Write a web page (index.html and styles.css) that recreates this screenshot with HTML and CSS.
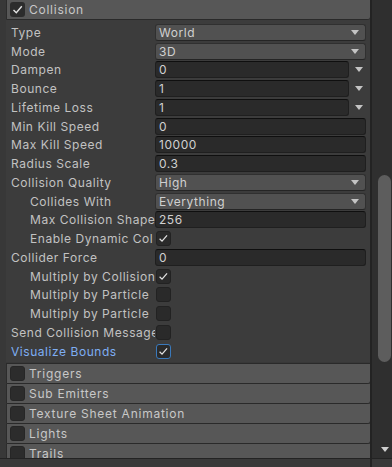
FILE: index.html
```html
<!DOCTYPE html>
<html lang="en">
<head>
  <meta charset="UTF-8">
  <title>Collision Module</title>
  <link rel="stylesheet" href="styles.css">
</head>
<body>
  <div class="window">
    <div class="main">
      <div class="inspector">
        <!-- Collision module, expanded -->
        <div class="module-head">
          <span class="toggle">
            <svg viewBox="0 0 15 15" width="15" height="15"><polyline points="3.5,8 6.3,10.8 11.8,4.2" fill="none" stroke="#e2e2e2" stroke-width="1.4"/></svg>
          </span>
          <span class="module-title">Collision</span>
        </div>
        <div class="module-body">
          <div class="row"><span class="prop">Type</span><div class="popup">World<i class="arrow"></i></div></div>
          <div class="row"><span class="prop">Mode</span><div class="popup">3D<i class="arrow"></i></div></div>
          <div class="row"><span class="prop">Dampen</span><div class="field">0</div><span class="curve"><i class="arrow"></i></span></div>
          <div class="row"><span class="prop">Bounce</span><div class="field">1</div><span class="curve"><i class="arrow"></i></span></div>
          <div class="row"><span class="prop">Lifetime Loss</span><div class="field">1</div><span class="curve"><i class="arrow"></i></span></div>
          <div class="row"><span class="prop">Min Kill Speed</span><div class="field">0</div></div>
          <div class="row"><span class="prop">Max Kill Speed</span><div class="field">10000</div></div>
          <div class="row"><span class="prop">Radius Scale</span><div class="field">0.3</div></div>
          <div class="row"><span class="prop">Collision Quality</span><div class="popup">High<i class="arrow"></i></div></div>
          <div class="row"><span class="prop sub">Collides With</span><div class="popup">Everything<i class="arrow"></i></div></div>
          <div class="row"><span class="prop sub">Max Collision Shape</span><div class="field">256</div></div>
          <div class="row"><span class="prop sub">Enable Dynamic Col</span><span class="check"><svg viewBox="0 0 15 15" width="13" height="13"><polyline points="3,7.8 5.8,10.6 11.6,3.8" fill="none" stroke="#e2e2e2" stroke-width="1.4"/></svg></span></div>
          <div class="row"><span class="prop">Collider Force</span><div class="field">0</div></div>
          <div class="row"><span class="prop sub">Multiply by Collision</span><span class="check"><svg viewBox="0 0 15 15" width="13" height="13"><polyline points="3,7.8 5.8,10.6 11.6,3.8" fill="none" stroke="#e2e2e2" stroke-width="1.4"/></svg></span></div>
          <div class="row"><span class="prop sub">Multiply by Particle</span><span class="check"></span></div>
          <div class="row"><span class="prop sub">Multiply by Particle</span><span class="check"></span></div>
          <div class="row"><span class="prop">Send Collision Message</span><span class="check"></span></div>
          <div class="row"><span class="prop focused">Visualize Bounds</span><span class="check focus"><svg viewBox="0 0 15 15" width="13" height="13"><polyline points="3,7.8 5.8,10.6 11.6,3.8" fill="none" stroke="#e2e2e2" stroke-width="1.4"/></svg></span></div>
        </div>

        <!-- collapsed modules -->
        <div class="module-list">
          <div class="module-head"><span class="toggle off"></span><span class="module-title">Triggers</span></div>
          <div class="module-head"><span class="toggle off"></span><span class="module-title">Sub Emitters</span></div>
          <div class="module-head"><span class="toggle off"></span><span class="module-title">Texture Sheet Animation</span></div>
          <div class="module-head"><span class="toggle off"></span><span class="module-title">Lights</span></div>
          <div class="module-head"><span class="toggle off"></span><span class="module-title">Trails</span></div>
        </div>
      </div>

      <div class="scrollbar">
        <div class="thumb"></div>
        <div class="track-rest"></div>
        <i class="arrow scroll-down"></i>
      </div>
    </div>
    <div class="statusbar"><div class="status-left"></div></div>
  </div>
</body>
</html>
```

FILE: styles.css
```css
* {
  box-sizing: border-box;
}
body {
  margin: 0;
  background: #383838;
  font-family: Inter, "Noto Sans", sans-serif;
  font-size: 12px;
  color: #c4c4c4;
  overflow: hidden;
}
.window {
  width: 392px;
  height: 467px;
  display: flex;
  flex-direction: column;
}
.main {
  display: flex;
  height: 458px;
}
.inspector {
  width: 372px;
  padding-left: 6px;
  border-right: 2px solid #232323;
  overflow: hidden;
  background: #383838;
}

/* module headers */
.module-head {
  display: flex;
  align-items: center;
  gap: 4px;
  height: 20px;
  padding-left: 3px;
  background: #575757;
  border-left: 1px solid #2c2c2c;
  border-bottom: 1px solid #2a2a2a;
  border-radius: 0 0 3px 0;
}
.module-title {
  color: #c8c8c8;
  white-space: nowrap;
  letter-spacing: 0.75px;
}
.toggle {
  width: 15px;
  height: 15px;
  display: flex;
  background: #2c2c2c;
  border-radius: 3px;
  flex: none;
}
.toggle.off {
  border: 1px solid #262626;
}
.module-list {
  margin-top: 1px;
  border-top: 1px solid #2a2a2a;
}

/* property rows */
.module-body {
  background: #3c3c3c;
  padding: 3px 4px 1px 5px;
}
.row {
  display: flex;
  align-items: center;
  height: 18.75px;
}
.prop {
  flex: 0 0 144px;
  white-space: nowrap;
  overflow: hidden;
  color: #c2c2c2;
  letter-spacing: 0.55px;
}
.prop.sub {
  padding-left: 19px;
}
.prop.focused {
  color: #7eaef3;
}
.popup, .field {
  flex: 1;
  height: 17px;
  display: flex;
  align-items: center;
  padding-left: 3px;
  border-radius: 3px;
  color: #d0d0d0;
  letter-spacing: 0.55px;
}
.popup {
  background: #515151;
  border: 1px solid #303030;
  border-bottom-color: #252525;
  padding-right: 6px;
}
.popup .arrow {
  margin-left: auto;
}
.field {
  background: #2a2a2a;
  border: 1px solid #1f1f1f;
  border-top-color: #0f0f0f;
}
.curve {
  flex: 0 0 17px;
  display: flex;
  justify-content: flex-end;
  padding-right: 3px;
}
.arrow {
  display: block;
  width: 0;
  height: 0;
  border-left: 4.5px solid transparent;
  border-right: 4.5px solid transparent;
  border-top: 5px solid #c4c4c4;
}
.check {
  width: 15px;
  height: 15px;
  display: flex;
  align-items: center;
  justify-content: center;
  margin-left: 1px;
  background: #2a2a2a;
  border: 1px solid #222222;
  border-radius: 3px;
}
.check.focus {
  border-color: #3a79bb;
}

/* scrollbar */
.scrollbar {
  flex: 1;
  display: flex;
  flex-direction: column;
  background: #2f2f2f;
  padding-bottom: 6px;
}
.thumb {
  margin: 175px 0 0 6px;
  width: 13px;
  height: 187px;
  background: #5d5d5d;
  border-radius: 6.5px;
}
.track-rest {
  flex: 1;
}
.scroll-down {
  margin-left: 9px;
  border-top-color: #cfcfcf;
}
.statusbar {
  flex: 1;
  display: flex;
  background: #393939;
  border-top: 1px solid #232323;
}
.status-left {
  width: 372px;
  border-right: 2px solid #232323;
}
```
